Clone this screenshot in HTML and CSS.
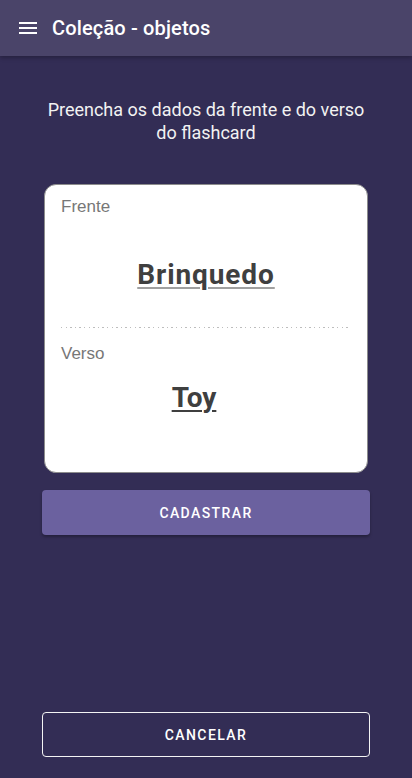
FILE: index.html
```html
<!DOCTYPE html>
<html lang="pt">
<head>
<meta charset="utf-8">
<meta name="viewport" content="width=device-width, initial-scale=1">
<title>Coleção - objetos</title>
<link rel="stylesheet" href="styles.css">
</head>
<body>
<div class="screen">
  <header class="appbar">
    <button class="menu-btn" aria-label="Menu">
      <svg width="24" height="24" viewBox="0 0 24 24"><path d="M3 18h18v-2H3v2zm0-5h18v-2H3v2zm0-7v2h18V6H3z" fill="#fff"/></svg>
    </button>
    <h1 class="title">Coleção - objetos</h1>
  </header>
  <main class="content">
    <p class="intro">Preencha os dados da frente e do verso do flashcard</p>
    <section class="card">
      <div class="label">Frente</div>
      <div class="word word-front">Brinquedo</div>
      <div class="divider"></div>
      <div class="label label-back">Verso</div>
      <div class="word word-back">Toy</div>
    </section>
    <button class="btn btn-primary">CADASTRAR</button>
    <button class="btn btn-outline">CANCELAR</button>
  </main>
</div>
</body>
</html>
```
FILE: styles.css
```css
html, body {
  margin: 0;
  padding: 0;
}
body {
  background: #332d55;
  font-family: Roboto, "Noto Sans", "Liberation Sans", sans-serif;
  color: #fff;
}
.screen {
  min-height: 100vh;
  display: flex;
  flex-direction: column;
}
.appbar {
  height: 56px;
  background: #4a4469;
  display: flex;
  align-items: center;
  padding: 0 16px;
  box-shadow: 0 2px 4px rgba(0,0,0,0.25);
  position: relative;
  z-index: 1;
}
.menu-btn {
  background: none;
  border: 0;
  padding: 0;
  width: 24px;
  height: 24px;
  display: flex;
  margin-right: 12px;
  margin-left: 0;
}
.title {
  margin: 0;
  font-size: 20px;
  font-weight: 500;
  letter-spacing: 0.15px;
  color: #fff;
}
.content {
  flex: 1;
  display: flex;
  flex-direction: column;
  padding: 0 42px 21px;
}
.intro {
  margin: 42px 0 40px;
  text-align: center;
  font-size: 18px;
  line-height: 23px;
  color: #f2f2f2;
  padding: 0 2px;
}
.card {
  margin: 0 2px;
  height: 289px;
  box-sizing: border-box;
  background: #fff;
  border: 1px solid #8c8c8c;
  border-radius: 12px;
  padding: 12px 16px 0;
  display: flex;
  flex-direction: column;
}
.label {
  font-family: "Liberation Sans", Arial, sans-serif;
  font-size: 17px;
  line-height: 20px;
  color: #777;
}
.word {
  text-align: center;
  font-weight: 700;
  font-size: 28px;
  line-height: 34px;
  color: #3f3f3f;
  text-decoration: underline;
  text-decoration-thickness: 2px;
  text-underline-offset: 3px;
}
.word-front {
  margin-top: 41px;
  letter-spacing: 0.9px;
  text-decoration-color: #a0a0a0;
}
.word-back {
  margin-top: 17px;
  padding-right: 24px;
  text-decoration-color: #3f3f3f;
}
.divider {
  margin-top: 35px;
  height: 1px;
  background-image: repeating-linear-gradient(to right, #bdbdbd 0 1.5px, transparent 1.5px 4.6px);
}
.label-back {
  margin-top: 16px;
}
.btn {
  height: 45px;
  border-radius: 4px;
  font-family: Roboto, "Noto Sans", "Liberation Sans", sans-serif;
  font-size: 14px;
  font-weight: 500;
  letter-spacing: 1.4px;
  color: #fff;
  cursor: pointer;
}
.btn-primary {
  margin-top: 17px;
  background: #6b619f;
  border: 0;
  box-shadow: 0 2px 3px rgba(0,0,0,0.3);
}
.btn-outline {
  margin-top: auto;
  background: transparent;
  border: 1px solid #f4f4f4;
}
```
